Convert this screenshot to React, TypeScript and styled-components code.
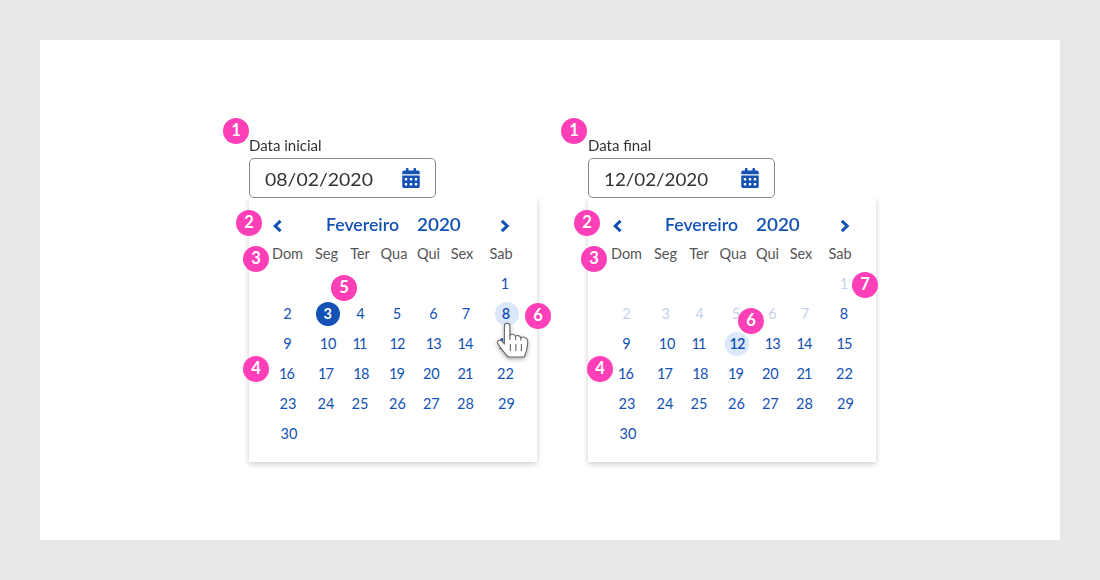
import React from 'react';
import styled, { createGlobalStyle } from 'styled-components';
import { FaCalendarAlt } from 'react-icons/fa';

const Global = createGlobalStyle`
  * { box-sizing: border-box; }
  body { margin: 0; background: #e8e8e8; font-family: Lato, "Open Sans", sans-serif; }
`;

const Page = styled.div`
  height: 580px;
  padding: 40px;
  background: #e8e8e8;
`;

const Sheet = styled.main`
  height: 500px;
  padding: 96px 0 0 209px;
  background: #fff;
  display: flex;
  align-items: flex-start;
  gap: 51px;
`;

const Picker = styled.section`
  position: relative;
  width: 288px;
  display: flex;
  flex-direction: column;
`;

const Label = styled.label`
  height: 22px;
  line-height: 20px;
  font-size: 14.5px;
  color: #333;
  white-space: nowrap;
`;

const Fit = styled.span<{ $x: number }>`
  display: inline-block;
  transform: scaleX(${p => p.$x});
  transform-origin: left;
`;

const Field = styled.div`
  width: 187px;
  height: 40px;
  padding: 0 15px;
  border: 1px solid #888;
  border-radius: 5px;
  background: #fff;
  display: flex;
  align-items: center;
  justify-content: space-between;
  font-size: 17px;
  line-height: 20px;
  color: #333;
`;

const DateText = styled.span`
  padding-top: 3px;
`;

const CalendarIcon = styled(FaCalendarAlt)`
  width: 18px;
  height: 20px;
  color: #1351b4;
`;

const Panel = styled.div`
  height: 264px;
  background: #fff;
  box-shadow: 0 2px 6px rgba(0, 0, 0, 0.2);
  clip-path: inset(0 -12px -14px -12px);
`;

const Header = styled.header<{ $nudge: number }>`
  height: 41px;
  padding: 13px 0 0 ${p => 23 + p.$nudge}px;
  display: flex;
  align-items: flex-start;
  color: #1351b4;
  font-size: 17px;
  font-weight: 600;
  line-height: 28px;
`;

const Chevron = styled.svg`
  width: 11px;
  height: 14px;
  margin-top: 8px;
  flex: none;
  fill: none;
  stroke: currentColor;
  stroke-width: 3;
`;

const Month = styled.span<{ $nudge: number }>`
  width: 91px;
  margin-left: ${p => 43 - p.$nudge}px;
`;

const Year = styled.span<{ $nudge: number }>`
  width: ${p => 82 + p.$nudge}px;
`;

const Weekdays = styled.div`
  height: 30px;
  padding-left: 20px;
  display: grid;
  grid-template-columns: 37px 41px 26px 42px 27px 40px 38px;
  justify-items: center;
  font-size: 14.5px;
  line-height: 29px;
  color: #555;
`;

const Week = styled.div`
  height: 30px;
  padding-left: 20px;
  display: grid;
  grid-template-columns: 37px 42px 25px 48px 23px 43px 38px;
  align-items: center;
  justify-items: center;
`;

type Tone = 'plain' | 'off' | 'today' | 'picked';

const Day = styled.span<{ $tone: Tone }>`
  width: 24px;
  height: 24px;
  border-radius: 50%;
  display: flex;
  align-items: center;
  justify-content: center;
  font-size: 14.5px;
  line-height: 24px;
  font-weight: ${p => (p.$tone === 'today' ? 700 : p.$tone === 'picked' ? 600 : 400)};
  color: ${p => (p.$tone === 'today' ? '#fff' : p.$tone === 'off' ? '#c4d3ec' : '#1351b4')};
  background: ${p => (p.$tone === 'today' ? '#1351b4' : p.$tone === 'picked' ? '#dbe7fb' : 'transparent')};
  margin-left: ${p => (p.$tone === 'today' || p.$tone === 'picked' ? 2 : 0)}px;
`;

const Digits = styled.span<{ $shift: number; $space: number }>`
  position: relative;
  left: ${p => p.$shift}px;
  letter-spacing: ${p => p.$space}px;
  margin-right: ${p => -p.$space}px;
`;

const Badge = styled.span<{ $x: number; $y: number }>`
  position: absolute;
  left: ${p => p.$x}px;
  top: ${p => p.$y}px;
  width: 26px;
  height: 26px;
  border-radius: 50%;
  background: #ff3fb8;
  color: #fff;
  font-size: 16.5px;
  font-weight: 700;
  line-height: 25px;
  text-align: center;
`;

const Pointer = styled.svg`
  position: absolute;
  left: 243.5px;
  top: 183px;
  overflow: visible;
  filter: drop-shadow(0 2px 2px rgba(0, 0, 0, 0.3));
`;

const Hand = () => (
  <Pointer width="40" height="42" viewBox="0 0 40 42">
    <path
      d="M11.4 25V7.2C11.4 5.3 12.5 4.3 14.1 4.3S16.9 5.3 16.9 7.2V16.3C17.6 15.5 18.6 15.1 19.7 15.2C21.1 15.3 22.1 16.3 22.5 17.3C23.2 16.7 24.2 16.4 25.2 16.6C26.6 16.8 27.4 17.7 27.8 18.7C29.8 17.3 35 18.4 34.7 23.2C34.6 26 34.2 28.5 33.7 31C33.3 33.2 32.2 34.7 31.9 36.6Q31.7 38 29.8 38H16.4Q14.6 38 13.6 36.4C12.1 34.3 9.8 31.8 8 29.4C6.8 27.7 6.1 26.4 5.1 25C4.2 23.7 4.3 22.2 5.5 21.6C7.8 20.4 9.8 22.7 11.4 25Z"
      fill="#fff"
      stroke="#666"
      strokeWidth="1.1"
      strokeLinejoin="round"
    />
    <path d="M16.9 16V21M22.5 17.5V21M27.8 18.8V21.5M17.4 25V32M22.9 25V32M28.4 25V32" stroke="#666" strokeWidth="1.1" fill="none" />
  </Pointer>
);

const shifts: Record<number, number> = {
  1: -1, 3: -0.3, 4: 0, 6: 1, 7: 0.5, 8: -1, 10: 1, 11: -0.5, 12: 0.5, 13: 1.2,
  15: -0.5, 16: -0.5, 17: -1, 18: 0.8, 20: -1.2, 22: -0.5, 23: 0.5, 24: -1, 25: -0.5,
  26: 0.5, 27: -1.2, 29: 0.5, 30: 1.5,
};

const spacing = (n: number) => (n === 11 ? -2 : n >= 11 && n < 20 ? -0.8 : n === 21 ? -0.8 : n === 10 ? -0.2 : 0);

const weeks: (number | null)[][] = [
  [null, null, null, null, null, null, 1],
  [2, 3, 4, 5, 6, 7, 8],
  [9, 10, 11, 12, 13, 14, 15],
  [16, 17, 18, 19, 20, 21, 22],
  [23, 24, 25, 26, 27, 28, 29],
  [30, null, null, null, null, null, null],
];

interface CalendarProps {
  label: string;
  value: string;
  valueScale: number;
  tone: (day: number) => Tone;
  nudge?: number;
  badges: [number, number, number][];
  pointer?: boolean;
}

const Calendar = ({ label, value, valueScale, tone, nudge = 0, badges, pointer }: CalendarProps) => (
  <Picker>
    <Label><Fit $x={1.035}>{label}</Fit></Label>
    <Field>
      <DateText><Fit $x={valueScale}>{value}</Fit></DateText>
      <CalendarIcon />
    </Field>
    <Panel>
      <Header $nudge={nudge}>
        <Chevron viewBox="0 0 11 14"><path d="M8.6 1.8L3.2 7L8.6 12.2" /></Chevron>
        <Month $nudge={nudge}><Fit $x={1.04}>Fevereiro</Fit></Month>
        <Year $nudge={nudge}><Fit $x={1.11}>2020</Fit></Year>
        <Chevron viewBox="0 0 11 14"><path d="M2.8 1.8L8.2 7L2.8 12.2" /></Chevron>
      </Header>
      <Weekdays>
        {['Dom', 'Seg', 'Ter', 'Qua', 'Qui', 'Sex', 'Sab'].map(d => <span key={d}>{d}</span>)}
      </Weekdays>
      {weeks.map((week, i) => (
        <Week key={i}>
          {week.map((n, j) => n === null ? <span key={j} /> : (
            <Day key={j} $tone={tone(n)}>
              <Digits $shift={shifts[n] ?? 0} $space={spacing(n)}>{n}</Digits>
            </Day>
          ))}
        </Week>
      ))}
    </Panel>
    {pointer && <Hand />}
    {badges.map(([n, x, y]) => <Badge key={n} $x={x} $y={y}>{n}</Badge>)}
  </Picker>
);

export default function App() {
  return (
    <>
      <Global />
      <Page>
        <Sheet>
          <Calendar
            label="Data inicial"
            value="08/02/2020"
            valueScale={1.145}
            tone={n => (n === 3 ? 'today' : n === 8 ? 'picked' : 'plain')}
            badges={[[1, -26, -18], [2, -13, 74], [3, -6, 110], [4, -6, 220], [5, 82, 139], [6, 276, 167]]}
            pointer
          />
          <Calendar
            label="Data final"
            value="12/02/2020"
            valueScale={1.105}
            nudge={1}
            tone={n => (n < 8 ? 'off' : n === 12 ? 'picked' : 'plain')}
            badges={[[1, -27, -18], [2, -14, 74], [3, -7, 110], [4, -1, 220], [6, 150, 172], [7, 264, 136]]}
          />
        </Sheet>
      </Page>
    </>
  );
}
